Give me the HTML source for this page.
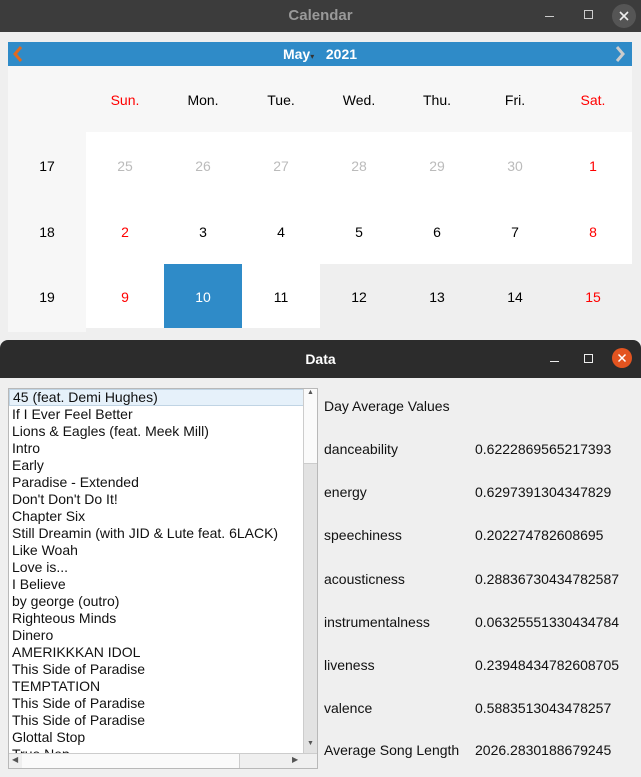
<!DOCTYPE html>
<html><head><meta charset="utf-8"><style>
*{margin:0;padding:0;box-sizing:border-box}
body{width:641px;height:777px;overflow:hidden;background:#efefef;font-family:"Liberation Sans","DejaVu Sans",sans-serif;position:relative}
.abs{position:absolute}
.tb{left:0;top:0;width:641px;height:32px;background:#3c3c3c;color:#999;font-weight:bold;font-size:15px;text-align:center;line-height:32px}
.nav{left:8px;top:42px;width:624px;height:24px;background:#2f8bc8;color:#fff;font-weight:bold;font-size:14px;text-align:center;line-height:24px}
.hdr{left:8px;top:66px;width:624px;height:66px;background:#f7f7f7}
.c{position:absolute;width:78px;text-align:center;font-size:14px}
.dtb{left:0;top:340px;width:641px;height:38px;background:#2c2c2c;border-radius:8px 8px 0 0;color:#fff;font-weight:bold;font-size:14px;text-align:center;line-height:38px}
.list{left:8px;top:388px;width:310px;height:381px;background:#fff;border:1px solid #b8b8b8;overflow:hidden}
.list div{height:17px;line-height:17px;font-size:14px;padding-left:3px;color:#111;white-space:nowrap}
.lab{font-size:14px;color:#111}
</style></head><body>
<div class="abs tb">Calendar</div>
<div class="abs" style="left:545px;top:16px;width:9px;height:1px;background:#ccc"></div>
<div class="abs" style="left:584px;top:10px;width:9px;height:9px;border:1px solid #ccc"></div>
<div class="abs" style="left:499px;top:0"></div>
<svg class="abs" style="left:612px;top:4px" width="24" height="24"><circle cx="12" cy="12" r="12" fill="#555"/><path d="M8 8L16 16M16 8L8 16" stroke="#eee" stroke-width="1.6"/></svg>
<div class="abs" style="left:0;top:32px;width:641px;height:308px;background:#efefef"></div>
<div class="abs nav">May<span style="font-size:8px;color:#333">▾</span>&nbsp;&nbsp; 2021</div>
<svg class="abs" style="left:12px;top:45px" width="12" height="18"><path d="M9 2L3 9L9 16" stroke="#e06a20" stroke-width="3" fill="none"/></svg>
<svg class="abs" style="left:614px;top:45px" width="12" height="18"><path d="M3 2L9 9L3 16" stroke="#ccc" stroke-width="3" fill="none"/></svg>
<div class="abs hdr"></div>
<div class="abs" style="left:8px;top:132px;width:78px;height:200px;background:#f7f7f7"></div>
<div class="abs" style="left:86px;top:132px;width:546px;height:132px;background:#fff"></div>
<div class="abs" style="left:86px;top:264px;width:234px;height:64px;background:#fff"></div>
<div class="abs" style="left:320px;top:264px;width:312px;height:70px;background:#efefef"></div>
<div class="abs" style="left:164px;top:264px;width:78px;height:64px;background:#2f8bc8"></div>
<div class="c" style="left:86px;top:92px;color:#f00">Sun.</div>
<div class="c" style="left:164px;top:92px">Mon.</div>
<div class="c" style="left:242px;top:92px">Tue.</div>
<div class="c" style="left:320px;top:92px">Wed.</div>
<div class="c" style="left:398px;top:92px">Thu.</div>
<div class="c" style="left:476px;top:92px">Fri.</div>
<div class="c" style="left:554px;top:92px;color:#f00">Sat.</div>

<div class="c" style="left:8px;top:158px">17</div>
<div class="c" style="left:86px;top:158px;color:#bbb">25</div>
<div class="c" style="left:164px;top:158px;color:#bbb">26</div>
<div class="c" style="left:242px;top:158px;color:#bbb">27</div>
<div class="c" style="left:320px;top:158px;color:#bbb">28</div>
<div class="c" style="left:398px;top:158px;color:#bbb">29</div>
<div class="c" style="left:476px;top:158px;color:#bbb">30</div>
<div class="c" style="left:554px;top:158px;color:#f00">1</div>

<div class="c" style="left:8px;top:224px">18</div>
<div class="c" style="left:86px;top:224px;color:#f00">2</div>
<div class="c" style="left:164px;top:224px">3</div>
<div class="c" style="left:242px;top:224px">4</div>
<div class="c" style="left:320px;top:224px">5</div>
<div class="c" style="left:398px;top:224px">6</div>
<div class="c" style="left:476px;top:224px">7</div>
<div class="c" style="left:554px;top:224px;color:#f00">8</div>

<div class="c" style="left:8px;top:289px">19</div>
<div class="c" style="left:86px;top:289px;color:#f00">9</div>
<div class="c" style="left:164px;top:289px;color:#fff">10</div>
<div class="c" style="left:242px;top:289px">11</div>
<div class="c" style="left:320px;top:289px">12</div>
<div class="c" style="left:398px;top:289px">13</div>
<div class="c" style="left:476px;top:289px">14</div>
<div class="c" style="left:554px;top:289px;color:#f00">15</div>

<div class="abs dtb">Data</div>
<div class="abs" style="left:550px;top:361px;width:9px;height:1px;background:#eee"></div>
<div class="abs" style="left:584px;top:354px;width:9px;height:9px;border:1px solid #eee"></div>
<svg class="abs" style="left:612px;top:348px" width="20" height="20"><circle cx="10" cy="10" r="10" fill="#e35420"/><path d="M6.5 6.5L13.5 13.5M13.5 6.5L6.5 13.5" stroke="#fff" stroke-width="1.5"/></svg>

<div class="abs list">
<div style="background:#e6f1fa;border:1px solid #c0d4e4;margin-right:13px;line-height:15px">45 (feat. Demi Hughes)</div>
<div>If I Ever Feel Better</div>
<div>Lions &amp; Eagles (feat. Meek Mill)</div>
<div>Intro</div>
<div>Early</div>
<div>Paradise - Extended</div>
<div>Don't Don't Do It!</div>
<div>Chapter Six</div>
<div>Still Dreamin (with JID &amp; Lute feat. 6LACK)</div>
<div>Like Woah</div>
<div>Love is...</div>
<div>I Believe</div>
<div>by george (outro)</div>
<div>Righteous Minds</div>
<div>Dinero</div>
<div>AMERIKKKAN IDOL</div>
<div>This Side of Paradise</div>
<div>TEMPTATION</div>
<div>This Side of Paradise</div>
<div>This Side of Paradise</div>
<div>Glottal Stop</div>
<div>True Nep</div>
</div>
<div class="abs" style="left:303px;top:389px;width:14px;height:364px;background:#e2e2e2;border-left:1px solid #ccc"></div>
<div class="abs" style="left:304px;top:389px;width:13px;height:75px;background:#fafafa;border-bottom:1px solid #ccc;font-size:7px;text-align:center;color:#555">▲</div>
<div class="abs" style="left:304px;top:740px;width:13px;height:13px;font-size:7px;text-align:center;color:#555">▼</div>
<div class="abs" style="left:9px;top:753px;width:308px;height:15px;background:#efefef;border-top:1px solid #ccc"></div>
<div class="abs" style="left:22px;top:754px;width:218px;height:14px;background:#fafafa;border-right:1px solid #ccc"></div>
<div class="abs" style="left:12px;top:755px;font-size:8px;color:#555">◀</div>
<div class="abs" style="left:292px;top:755px;font-size:8px;color:#555">▶</div>

<div class="abs lab" style="left:324px;top:398px">Day Average Values</div>
<div class="abs lab" style="left:324px;top:441px">danceability</div><div class="abs lab" style="left:475px;top:441px">0.6222869565217393</div>
<div class="abs lab" style="left:324px;top:484px">energy</div><div class="abs lab" style="left:475px;top:484px">0.6297391304347829</div>
<div class="abs lab" style="left:324px;top:527px">speechiness</div><div class="abs lab" style="left:475px;top:527px">0.202274782608695</div>
<div class="abs lab" style="left:324px;top:571px">acousticness</div><div class="abs lab" style="left:475px;top:571px">0.28836730434782587</div>
<div class="abs lab" style="left:324px;top:614px">instrumentalness</div><div class="abs lab" style="left:475px;top:614px">0.06325551330434784</div>
<div class="abs lab" style="left:324px;top:657px">liveness</div><div class="abs lab" style="left:475px;top:657px">0.23948434782608705</div>
<div class="abs lab" style="left:324px;top:700px">valence</div><div class="abs lab" style="left:475px;top:700px">0.5883513043478257</div>
<div class="abs lab" style="left:324px;top:742px">Average Song Length</div><div class="abs lab" style="left:475px;top:742px">2026.2830188679245</div>
</body></html>
